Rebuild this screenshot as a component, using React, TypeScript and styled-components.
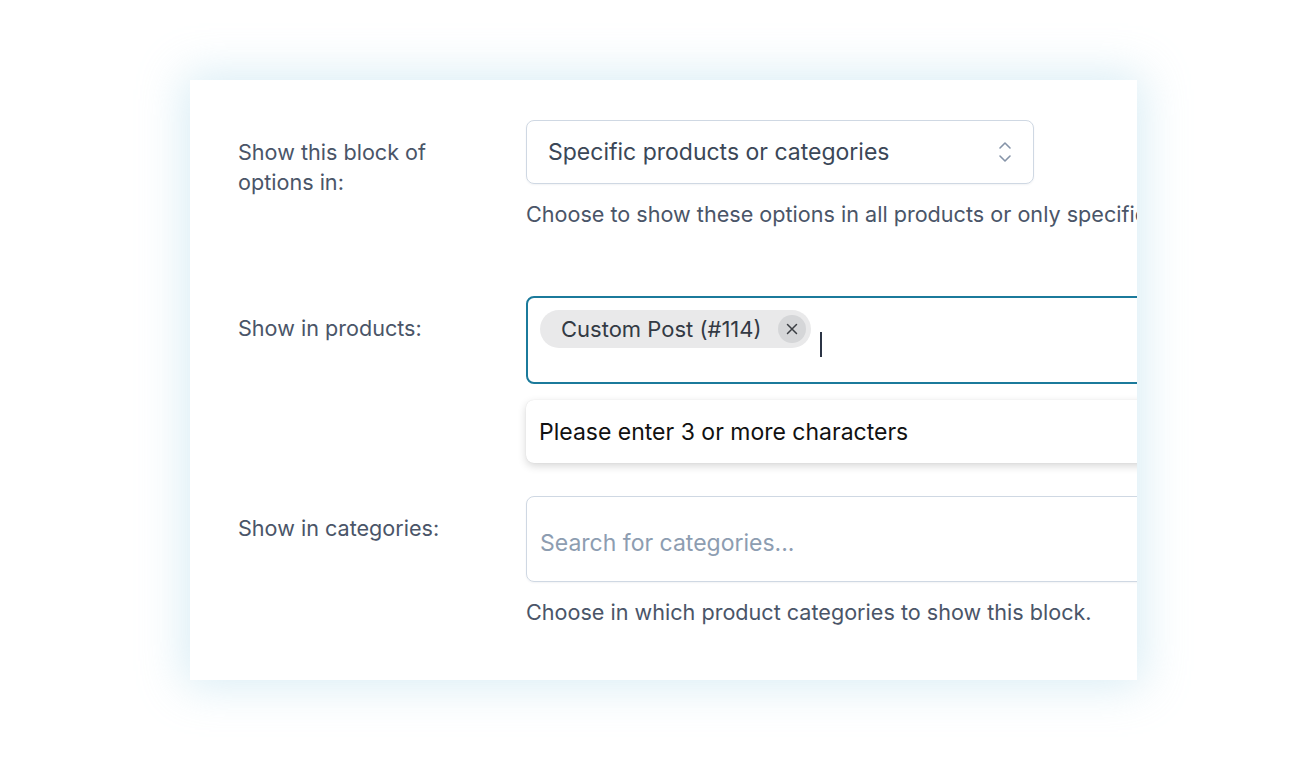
import React from 'react';
import styled, { createGlobalStyle } from 'styled-components';

const GlobalStyle = createGlobalStyle`
  html, body {
    margin: 0;
    padding: 0;
    background: #ffffff;
  }
  body {
    font-family: "Inter", "Liberation Sans", sans-serif;
  }
`;

const Page = styled.div`
  width: 1300px;
  height: 757px;
  padding-top: 80px;
  padding-left: 190px;
  box-sizing: border-box;
  background: #ffffff;
`;

const Card = styled.div`
  width: 947px;
  height: 600px;
  box-sizing: border-box;
  padding: 40px 0 0 48px;
  background: #ffffff;
  overflow: hidden;
  box-shadow: 0 0 42px 6px rgba(170, 215, 232, 0.45);
`;

const Row = styled.div<{ $spacing: number }>`
  display: grid;
  grid-template-columns: 288px 760px;
  margin-bottom: ${(p) => p.$spacing}px;
`;

const Label = styled.div`
  padding-top: 17px;
  width: 215px;
  font-size: 21.6px;
  line-height: 30px;
  color: #4a5568;
`;

const Control = styled.div`
  display: flex;
  flex-direction: column;
`;

const Select = styled.div`
  width: 508px;
  height: 64px;
  box-sizing: border-box;
  display: flex;
  align-items: center;
  justify-content: space-between;
  padding: 0 20px 0 21px;
  border: 1px solid #cfd8e3;
  border-radius: 8px;
  box-shadow: 0 1px 2px rgba(30, 50, 80, 0.06);
  font-size: 23px;
  color: #3b4757;
`;

const Help = styled.div`
  margin-top: 15px;
  font-size: 21.6px;
  line-height: 30px;
  color: #4a5568;
  white-space: nowrap;
`;

const Field = styled.div<{ $focused?: boolean }>`
  height: ${(p) => (p.$focused ? 88 : 86)}px;
  box-sizing: border-box;
  display: flex;
  align-items: ${(p) => (p.$focused ? 'flex-start' : 'center')};
  padding: ${(p) => (p.$focused ? '12px 12px' : '0 13px')};
  border: ${(p) => (p.$focused ? '2px solid #1b7a9b' : '1px solid #cfd8e3')};
  border-radius: 8px;
  box-shadow: ${(p) => (p.$focused ? 'none' : '0 1px 2px rgba(30, 50, 80, 0.06)')};
`;

const Chip = styled.div`
  display: flex;
  align-items: center;
  height: 38px;
  padding: 0 5px 0 21px;
  border-radius: 19px;
  background: #e9e9ea;
  font-size: 22px;
  color: #333a44;
`;

const ChipRemove = styled.span`
  display: flex;
  align-items: center;
  justify-content: center;
  width: 28px;
  height: 28px;
  margin-left: 16px;
  border-radius: 50%;
  background: #d5d6d8;
  color: #3c3f44;
`;

const Caret = styled.span`
  width: 2px;
  height: 25px;
  margin: 22px 0 0 9px;
  background: #2b3445;
`;

const Dropdown = styled.div`
  margin-top: 16px;
  height: 63px;
  display: flex;
  align-items: center;
  padding-left: 13px;
  border-radius: 8px;
  background: #ffffff;
  box-shadow: 0 3px 8px rgba(0, 0, 0, 0.16), 0 0 1px rgba(0, 0, 0, 0.12);
  font-size: 23px;
  color: #111111;
`;

const Placeholder = styled.span`
  margin-top: 8px;
  font-size: 23px;
  color: #8d9db1;
`;

const Chevrons = () => (
  <svg width="16" height="26" viewBox="0 0 16 26" fill="none">
    <path d="M3 9 L8 4 L13 9" stroke="#8593a8" strokeWidth="1.6" strokeLinecap="round" strokeLinejoin="round" />
    <path d="M3 17 L8 22 L13 17" stroke="#8593a8" strokeWidth="1.6" strokeLinecap="round" strokeLinejoin="round" />
  </svg>
);

const Cross = () => (
  <svg width="12" height="12" viewBox="0 0 12 12" fill="none">
    <path d="M1.5 1.5 L10.5 10.5 M10.5 1.5 L1.5 10.5" stroke="#3c3f44" strokeWidth="1.5" strokeLinecap="round" />
  </svg>
);

const App = () => (
  <>
    <GlobalStyle />
    <Page>
      <Card>
        <Row $spacing={67}>
          <Label>Show this block of options in:</Label>
          <Control>
            <Select>
              <span>Specific products or categories</span>
              <Chevrons />
            </Select>
            <Help>Choose to show these options in all products or only specific products or categories.</Help>
          </Control>
        </Row>
        <Row $spacing={33}>
          <Label>Show in products:</Label>
          <Control>
            <Field $focused>
              <Chip>
                Custom Post (#114)
                <ChipRemove>
                  <Cross />
                </ChipRemove>
              </Chip>
              <Caret />
            </Field>
            <Dropdown>Please enter 3 or more characters</Dropdown>
          </Control>
        </Row>
        <Row $spacing={0}>
          <Label>Show in categories:</Label>
          <Control>
            <Field>
              <Placeholder>Search for categories...</Placeholder>
            </Field>
            <Help>Choose in which product categories to show this block.</Help>
          </Control>
        </Row>
      </Card>
    </Page>
  </>
);

export default App;
